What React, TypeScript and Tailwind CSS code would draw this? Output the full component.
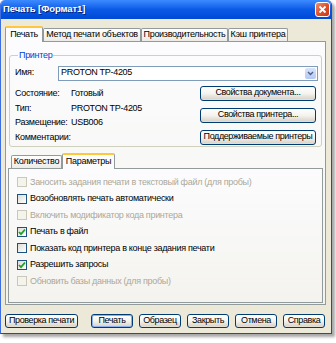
import React from 'react';

const font = { fontFamily: '"Liberation Sans", Arial, sans-serif' };

const XpButton = ({
  children,
  className,
  isDefault,
}: {
  children: React.ReactNode;
  className?: string;
  isDefault?: boolean;
}) => (
  <div
    className={`flex items-center justify-center whitespace-nowrap rounded-[3px] border border-[#003c74] bg-gradient-to-b from-white via-[#f4f3ee] to-[#d6d0c5] tracking-[-0.4px] text-black ${
      isDefault ? 'shadow-[inset_0_0_0_1px_#8bb0ef]' : 'shadow-[inset_0_-1px_0_#e3ded2]'
    } ${className ?? ''}`}
  >
    {children}
  </div>
);

const CheckRow = ({
  label,
  checked,
  disabled,
}: {
  label: string;
  checked?: boolean;
  disabled?: boolean;
}) => (
  <div className="flex h-[16.5px] items-center pl-[8px]">
    <div
      className={`flex h-[10px] w-[10px] items-center justify-center border ${
        disabled
          ? 'border-[#cac8bb] bg-[#f5f4ea]'
          : 'border-[#1c5180] bg-gradient-to-br from-[#dcdcd7] to-white'
      }`}
    >
      {checked && (
        <svg width="8" height="8" viewBox="0 0 8 8">
          <path d="M1 4 L3 6.2 L7 1.5" fill="none" stroke="#21a121" strokeWidth="1.8" />
        </svg>
      )}
    </div>
    <span className={`ml-[3px] whitespace-nowrap ${disabled ? 'text-[#aca899]' : 'text-black'}`}>{label}</span>
  </div>
);

const Tab = ({ label, active, className }: { label: string; active?: boolean; className?: string }) => (
  <div
    className={`relative flex items-center justify-center whitespace-nowrap border border-b-0 text-black ${
      active
        ? 'z-10 mb-[-1px] h-[16px] border-[#919b9c] border-t-[2px] border-t-[#ffc83c] bg-[#fcfcfe] pb-[1px]'
        : 'h-[13px] border-[#919b9c] bg-gradient-to-b from-white to-[#ecebe6]'
    } rounded-t-[2px] ${className ?? ''}`}
  >
    {label}
  </div>
);

const checks = [
  { label: 'Заносить задания печати в текстовый файл (для пробы)', disabled: true },
  { label: 'Возобновлять печать автоматически' },
  { label: 'Включить модификатор кода принтера', disabled: true },
  { label: 'Печать в файл', checked: true },
  { label: 'Показать код принтера в конце задания печати' },
  { label: 'Разрешить запросы', checked: true },
  { label: 'Обновить базы данных (для пробы)', disabled: true },
];

const info = [
  ['Состояние:', 'Готовый'],
  ['Тип:', 'PROTON TP-4205'],
  ['Размещение:', 'USB006'],
  ['Комментарии:', ''],
];

export default function App() {
  return (
    <div className="h-[343px] w-[336px] bg-white text-[9px] tracking-[-0.3px]" style={font}>
      <div className="flex h-[334px] w-[332px] flex-col overflow-hidden rounded-t-[5px] border-l border-r border-b border-l-[#3d6fe0] border-r-[#2a4a9a] border-b-[#4a4a4a] shadow-[3px_3px_3px_rgba(0,0,0,0.35)]">
        {/* title bar */}
        <div className="flex h-[19px] items-center justify-between bg-gradient-to-b from-[#3d8bff] via-[#0a5ae6] to-[#0049d6] pl-[2px] pr-[1px]">
          <span className="whitespace-nowrap text-[9.5px] font-bold tracking-[-0.1px] text-white [text-shadow:1px_1px_0_#0a1f7a]">
            Печать [Формат1]
          </span>
          <div className="flex h-[15px] w-[15px] items-center justify-center rounded-[3px] border border-white bg-gradient-to-br from-[#f08a6c] via-[#e0512b] to-[#c43a14]">
            <svg width="9" height="9" viewBox="0 0 9 9">
              <path d="M1.5 1.5 L7.5 7.5 M7.5 1.5 L1.5 7.5" stroke="white" strokeWidth="1.8" />
            </svg>
          </div>
        </div>

        {/* body */}
        <div className="flex flex-1 flex-col bg-[#ece9d8] pt-[7px]">
          <div className="flex items-end pl-[4px]">
            <Tab label="Печать" active className="w-[38px]" />
            <Tab label="Метод печати объектов" className="w-[98px]" />
            <Tab label="Производительность" className="w-[87px]" />
            <Tab label="Кэш принтера" className="w-[60px]" />
          </div>

          {/* main tab panel */}
          <div className="ml-[4px] flex h-[264px] w-[321px] flex-col border border-[#919b9c] bg-gradient-to-b from-[#fcfcfe] to-[#f4f3ee] px-[3px] pt-[7px]">
            <fieldset className="h-[98px] rounded-[3px] border border-[#d0d0bf] pl-[5px] pr-[3px]">
              <legend className="ml-[3px] px-[1px] text-[#0046d5]">Принтер</legend>
              <div className="mt-[3px] flex items-center">
                <span className="w-[43px] text-black">Имя:</span>
                <div className="flex h-[15px] w-[260px] items-center justify-between border border-[#7f9db9] bg-white pl-[2px] pr-[1px]">
                  <span className="text-black">PROTON TP-4205</span>
                  <div className="flex h-[11px] w-[11px] items-center justify-center rounded-[2px] bg-gradient-to-b from-[#d8e4fc] to-[#b4c8f4]">
                    <svg width="7" height="5" viewBox="0 0 7 5">
                      <path d="M1 1 L3.5 3.5 L6 1" fill="none" stroke="#4d6185" strokeWidth="1.4" />
                    </svg>
                  </div>
                </div>
              </div>
              <div className="mt-[5px] flex">
                <div className="flex w-[185px] flex-col pt-[1px]">
                  {info.map(([k, v]) => (
                    <div key={k} className="flex h-[14.7px] items-center whitespace-nowrap text-black">
                      <span className="w-[56px]">{k}</span>
                      <span>{v}</span>
                    </div>
                  ))}
                </div>
                <div className="flex flex-col gap-[7px]">
                  <XpButton className="h-[15px] w-[116px]">Свойства документа...</XpButton>
                  <XpButton className="h-[15px] w-[116px]">Свойства принтера...</XpButton>
                  <XpButton className="h-[15px] w-[116px]">Поддерживаемые принтеры</XpButton>
                </div>
              </div>
            </fieldset>

            {/* inner tabs */}
            <div className="mt-[6px] flex items-end pl-[2px]">
              <Tab label="Количество" className="w-[51px]" />
              <Tab label="Параметры" active className="w-[53px]" />
            </div>
            <div className="ml-[-1px] flex h-[135px] w-[315px] flex-col border border-[#919b9c] bg-gradient-to-b from-[#fcfcfe] to-[#f4f3ee] pt-[5px]">
              {checks.map(c => (
                <CheckRow key={c.label} label={c.label} checked={c.checked} disabled={c.disabled} />
              ))}
            </div>
          </div>

          {/* bottom buttons */}
          <div className="mt-[9px] flex items-center pl-[4px]">
            <XpButton className="h-[14px] w-[73px]">Проверка печати</XpButton>
            <div className="ml-[13px] flex gap-[6px]">
              <XpButton className="h-[14px] w-[42px]" isDefault>
                Печать
              </XpButton>
              <XpButton className="h-[14px] w-[42px]">Образец</XpButton>
              <XpButton className="h-[14px] w-[42px]">Закрыть</XpButton>
              <XpButton className="h-[14px] w-[42px]">Отмена</XpButton>
              <XpButton className="h-[14px] w-[42px]">Справка</XpButton>
            </div>
          </div>
        </div>
      </div>
    </div>
  );
}
